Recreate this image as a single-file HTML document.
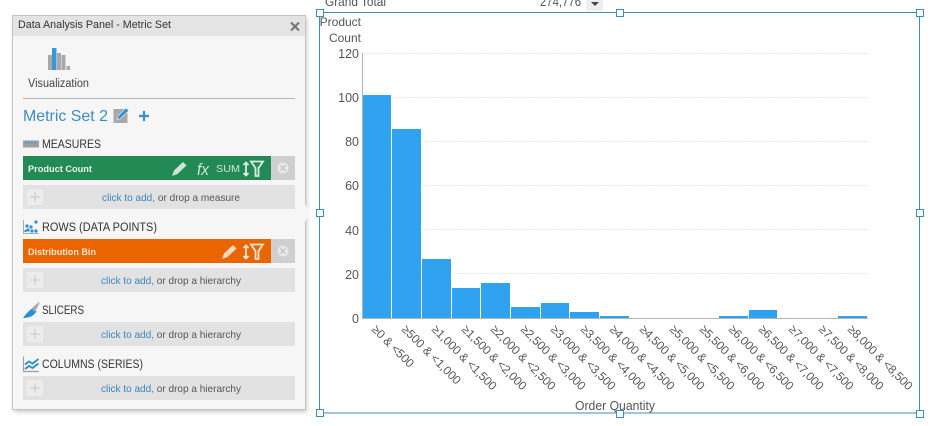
<!DOCTYPE html>
<html><head><meta charset="utf-8">
<style>
html,body{margin:0;padding:0;background:#fff;width:934px;height:426px;overflow:hidden}
svg{position:absolute;left:0;top:0}
text{font-family:"Liberation Sans",sans-serif}
</style></head>
<body>
<svg width="934" height="426" viewBox="0 0 934 426" xmlns="http://www.w3.org/2000/svg">
<defs><filter id="sh" x="-5%" y="-5%" width="112%" height="112%"><feGaussianBlur stdDeviation="2"/></filter></defs>

<!-- top clipped row -->
<text x="325" y="6" font-size="12.5" fill="#555" textLength="61" lengthAdjust="spacingAndGlyphs">Grand Total</text>
<text x="540" y="6" font-size="12.5" fill="#555" textLength="41" lengthAdjust="spacingAndGlyphs">274,776</text>
<rect x="586" y="0" width="17" height="11" fill="#eee"/>
<path d="M591 2h8l-4 4z" fill="#444"/>

<!-- chart grid -->
<g stroke="#e8e8e8" stroke-dasharray="2 1">
<path d="M363 53.5H868M363 97.5H868M363 141.5H868M363 185.5H868M363 229.5H868M363 273.5H868"/>
</g>
<!-- bars -->
<g fill="#30a3f0">
<rect x="362.5" y="95" width="28.5" height="223"/>
<rect x="392" y="129" width="29" height="189"/>
<rect x="422" y="259" width="29" height="59"/>
<rect x="452" y="288" width="28" height="30"/>
<rect x="481" y="283" width="29" height="35"/>
<rect x="511" y="307" width="29" height="11"/>
<rect x="541" y="303" width="28" height="15"/>
<rect x="570" y="312" width="29" height="6"/>
<rect x="600" y="316" width="29" height="2"/>
<rect x="719" y="316" width="29" height="2"/>
<rect x="749" y="310" width="28" height="8"/>
<rect x="838" y="316" width="29" height="2"/>
</g>
<path d="M362.500 53V318.500H868" fill="none" stroke="#b4b4b4"/>

<!-- y axis -->
<g font-size="12.500" fill="#555" text-anchor="end">
<text x="359" y="58">120</text>
<text x="359" y="102">100</text>
<text x="359" y="146">80</text>
<text x="359" y="190">60</text>
<text x="359" y="235">40</text>
<text x="359" y="279">20</text>
<text x="359" y="323">0</text>
<text x="361" y="26" font-size="12">Product</text>
<text x="361" y="42" font-size="12">Count</text>
</g>

<!-- x labels -->
<g font-size="12" fill="#555">
<text transform="translate(371,330) rotate(45)" textLength="54">≥0 &amp; &lt;500</text>
<text transform="translate(401,330) rotate(45)" textLength="78">≥500 &amp; &lt;1,000</text>
<text transform="translate(431,330) rotate(45)" textLength="86">≥1,000 &amp; &lt;1,500</text>
<text transform="translate(461,330) rotate(45)" textLength="86">≥1,500 &amp; &lt;2,000</text>
<text transform="translate(490,330) rotate(45)" textLength="86">≥2,000 &amp; &lt;2,500</text>
<text transform="translate(520,330) rotate(45)" textLength="86">≥2,500 &amp; &lt;3,000</text>
<text transform="translate(550,330) rotate(45)" textLength="86">≥3,000 &amp; &lt;3,500</text>
<text transform="translate(580,330) rotate(45)" textLength="86">≥3,500 &amp; &lt;4,000</text>
<text transform="translate(609,330) rotate(45)" textLength="86">≥4,000 &amp; &lt;4,500</text>
<text transform="translate(639,330) rotate(45)" textLength="86">≥4,500 &amp; &lt;5,000</text>
<text transform="translate(669,330) rotate(45)" textLength="86">≥5,000 &amp; &lt;5,500</text>
<text transform="translate(699,330) rotate(45)" textLength="86">≥5,500 &amp; &lt;6,000</text>
<text transform="translate(728,330) rotate(45)" textLength="86">≥6,000 &amp; &lt;6,500</text>
<text transform="translate(758,330) rotate(45)" textLength="86">≥6,500 &amp; &lt;7,000</text>
<text transform="translate(788,330) rotate(45)" textLength="86">≥7,000 &amp; &lt;7,500</text>
<text transform="translate(818,330) rotate(45)" textLength="86">≥7,500 &amp; &lt;8,000</text>
<text transform="translate(847,330) rotate(45)" textLength="86">≥8,000 &amp; &lt;8,500</text>
</g>
<text x="575" y="410" font-size="12.5" fill="#555" textLength="80" lengthAdjust="spacingAndGlyphs">Order Quantity</text>

<!-- selection frame -->
<rect x="319.500" y="12.500" width="600" height="400.500" fill="none" stroke="#3b8fb8"/>
<g fill="#fff" stroke="#3b8fb8">
<rect x="316.500" y="9.500" width="7" height="7"/>
<rect x="616.500" y="9.500" width="7" height="7"/>
<rect x="916.500" y="9.500" width="7" height="7"/>
<rect x="316.500" y="209.500" width="7" height="7"/>
<rect x="916.500" y="209.500" width="7" height="7"/>
<rect x="316.500" y="409.500" width="7" height="7"/>
<rect x="616.500" y="410.500" width="7" height="7"/>
<rect x="916.500" y="410.500" width="7" height="7"/>
</g>

<!-- panel -->
<rect x="14" y="18" width="293" height="394" fill="#888" opacity=".45" filter="url(#sh)"/>
<rect x="12.500" y="15.500" width="293" height="394" fill="#f6f6f6" stroke="#c4c4c4"/>
<path d="M305 204l5 9-5 9z" fill="#f6f6f6"/>
<rect x="13" y="16" width="292" height="20" fill="#e4e4e4"/>
<text x="18" y="28" font-size="11" fill="#333" textLength="153" lengthAdjust="spacingAndGlyphs">Data Analysis Panel - Metric Set</text>
<path d="M291 22.500l8 8m0-8l-8 8" stroke="#777" stroke-width="2.200" fill="none"/>

<!-- visualization icon -->
<rect x="48" y="55" width="4" height="15" fill="#a8a8a8"/>
<rect x="52" y="48" width="4.500" height="22" fill="#3a96d6"/>
<rect x="57" y="53" width="4" height="17" fill="#a8a8a8"/>
<rect x="61.500" y="55" width="4" height="15" fill="#a8a8a8"/>
<rect x="66.500" y="66" width="3.500" height="4" fill="#a8a8a8"/>
<text x="28" y="87" font-size="11.500" fill="#444" textLength="61" lengthAdjust="spacingAndGlyphs">Visualization</text>
<rect x="23" y="98" width="272" height="1" fill="#b4b4b4"/>

<text x="23" y="121" font-size="16" fill="#3a8cc8" textLength="85" lengthAdjust="spacingAndGlyphs">Metric Set 2</text>
<rect x="113.500" y="109" width="14" height="14" fill="#a8a8a8"/>
<path d="M117 120l1-4 8-8 3 2.500-8 7.500z" fill="#2f90d8" stroke="#f6f6f6" stroke-width=".6"/>
<path d="M139 116h10M144 111v10" stroke="#2f90d8" stroke-width="2.200"/>

<!-- MEASURES -->
<rect x="23" y="140.500" width="16" height="7" fill="#a0a0a0"/>
<path d="M26 140.500v3.500M29 140.500v3.500M32 140.500v3.500M35 140.500v3.500" stroke="#4a90c8"/>
<text x="42" y="148" font-size="11.500" fill="#333" textLength="59" lengthAdjust="spacingAndGlyphs">MEASURES</text>
<rect x="23" y="156" width="248" height="24" fill="#248a55"/>
<rect x="271" y="156" width="24" height="24" fill="#cfcfcf"/>
<text x="28" y="172" font-size="9.500" font-weight="bold" fill="#e8f3ec" textLength="64" lengthAdjust="spacingAndGlyphs">Product Count</text>
<path d="M172 176l2-5.500 9-8.500 3.500 3.500-9 8.500z" fill="#cfe4d8"/>
<text x="197" y="175" font-size="17" font-style="italic" fill="#cfe4d8" textLength="12" lengthAdjust="spacingAndGlyphs">fx</text>
<text x="216" y="172" font-size="10.500" fill="#cfe4d8" textLength="24" lengthAdjust="spacingAndGlyphs">SUM</text>
<g fill="none" stroke="#dcebe2" stroke-width="1.800">
<path d="M246 162.500v13M243.500 165l2.500-2.500 2.500 2.500M243.500 173l2.500 2.500 2.500-2.500"/>
<path d="M251 161.500h12l-4.500 6.500v8h-3v-8z"/>
</g>
<circle cx="283" cy="168" r="5.500" fill="#e8e8e8"/>
<path d="M280.500 165.500l5 5m0-5l-5 5" stroke="#c4c4c4" stroke-width="1.300"/>

<rect x="23" y="185" width="272" height="24" fill="#e2e2e2"/>
<rect x="27" y="189" width="16" height="16" fill="#ececec"/>
<path d="M30 197h10M35 192v10" stroke="#c8c8c8"/>
<text x="102" y="201" font-size="10.500" textLength="138" lengthAdjust="spacingAndGlyphs" fill="#555"><tspan fill="#3a85bd">click to add,</tspan> or drop a measure</text>

<!-- ROWS -->
<path d="M23.500 220v13.500H39" fill="none" stroke="#aaa"/>
<g fill="#2a8fd0"><circle cx="36" cy="222" r="1.600"/><circle cx="27" cy="226" r="1.600"/><circle cx="31" cy="227" r="1.600"/><circle cx="28" cy="230" r="1.600"/><circle cx="32" cy="231" r="1.600"/><circle cx="36" cy="231" r="1.600"/><circle cx="25.500" cy="231" r="1.200"/></g>
<text x="42" y="231" font-size="11.500" fill="#333" textLength="115" lengthAdjust="spacingAndGlyphs">ROWS (DATA POINTS)</text>
<rect x="23" y="239" width="248" height="24" fill="#ea6500"/>
<rect x="271" y="239" width="24" height="24" fill="#cfcfcf"/>
<text x="28" y="255" font-size="9.500" font-weight="bold" fill="#fbe6d6" textLength="68" lengthAdjust="spacingAndGlyphs">Distribution Bin</text>
<path d="M222 259l2-5.500 9-8.500 3.500 3.500-9 8.500z" fill="#f6d9c2"/>
<g fill="none" stroke="#fae8da" stroke-width="1.800">
<path d="M246 245.500v13M243.500 248l2.500-2.500 2.500 2.500M243.500 256l2.500 2.500 2.500-2.500"/>
<path d="M251 244.500h12l-4.500 6.500v8h-3v-8z"/>
</g>
<circle cx="283" cy="251" r="5.500" fill="#e8e8e8"/>
<path d="M280.500 248.500l5 5m0-5l-5 5" stroke="#c4c4c4" stroke-width="1.300"/>

<rect x="23" y="268" width="272" height="24" fill="#e2e2e2"/>
<rect x="27" y="272" width="16" height="16" fill="#ececec"/>
<path d="M30 280h10M35 275v10" stroke="#c8c8c8"/>
<text x="101" y="284" font-size="10.500" textLength="140" lengthAdjust="spacingAndGlyphs" fill="#555"><tspan fill="#3a85bd">click to add,</tspan> or drop a hierarchy</text>

<!-- SLICERS -->
<path d="M23 318c2-3 4-5 7-8l3-2 3.500 3.500-2.500 3c-3 2.500-7 3.500-11 3.500z" fill="#2a8fd0"/>
<path d="M32 308l7-6 .5 1-4 7.500-1.500 1.500z" fill="#a8a8a8"/>
<text x="42" y="314" font-size="11.500" fill="#333" textLength="42" lengthAdjust="spacingAndGlyphs">SLICERS</text>
<rect x="23" y="322" width="272" height="24" fill="#e2e2e2"/>
<rect x="27" y="326" width="16" height="16" fill="#ececec"/>
<path d="M30 334h10M35 329v10" stroke="#c8c8c8"/>
<text x="101" y="338" font-size="10.500" textLength="140" lengthAdjust="spacingAndGlyphs" fill="#555"><tspan fill="#3a85bd">click to add,</tspan> or drop a hierarchy</text>

<!-- COLUMNS -->
<path d="M23.500 356.500v15H39" fill="none" stroke="#a0a0a0" stroke-width="1.200"/>
<path d="M25 364.500l4-3 3.500 2 6-4.500M25 369l4-3 3.500 2 6-4.500" fill="none" stroke="#2a8fd0" stroke-width="1.800"/>
<text x="42" y="368" font-size="11.500" fill="#333" textLength="101" lengthAdjust="spacingAndGlyphs">COLUMNS (SERIES)</text>
<rect x="23" y="376" width="272" height="24" fill="#e2e2e2"/>
<rect x="27" y="380" width="16" height="16" fill="#ececec"/>
<path d="M30 388h10M35 383v10" stroke="#c8c8c8"/>
<text x="101" y="392" font-size="10.500" textLength="140" lengthAdjust="spacingAndGlyphs" fill="#555"><tspan fill="#3a85bd">click to add,</tspan> or drop a hierarchy</text>
</svg>
</body></html>
